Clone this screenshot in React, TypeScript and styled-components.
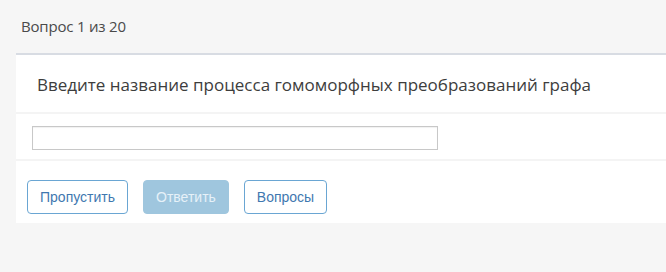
import styled, { createGlobalStyle } from "styled-components";

const GlobalStyle = createGlobalStyle`
  html, body {
    margin: 0;
    padding: 0;
    background: #f6f6f6;
    overflow: hidden;
  }
  body {
    font-family: "Open Sans", Lato, sans-serif;
  }
`;

const Page = styled.div`
  width: 666px;
  height: 272px;
  background: #f6f6f6;
  overflow: hidden;
`;

const Progress = styled.div`
  padding: 16px 0 0 21px;
  height: 20px;
  font-family: "Open Sans", sans-serif;
  font-size: 15px;
  line-height: 20px;
  color: #4a4a4a;
  letter-spacing: -0.2px;
`;

const Card = styled.section`
  margin: 17px -20px 0 16px;
  background: #fff;
  border-top: 2px solid #d8dce3;
`;

const Section = styled.div<{ $pad: string }>`
  padding: ${(p) => p.$pad};
  border-bottom: 2px solid #f4f4f4;

  &:last-child {
    border-bottom: none;
  }
`;

const Question = styled.h2`
  margin: 0;
  font-family: "Open Sans", sans-serif;
  font-weight: 400;
  font-size: 17px;
  line-height: 22px;
  color: #3d3d3d;
`;

const AnswerInput = styled.input`
  display: block;
  box-sizing: border-box;
  width: 406px;
  height: 24px;
  margin: 0;
  padding: 2px 6px;
  border: 1px solid #c8c8c8;
  border-radius: 0;
  box-shadow: inset 0 1px 1px rgba(0, 0, 0, 0.06);
  background: #fff;
  font-size: 14px;
  outline: none;
`;

const Actions = styled.div`
  display: flex;
  gap: 15px;
`;

const Button = styled.button<{ $primary?: boolean }>`
  box-sizing: border-box;
  height: 34px;
  padding: 0 12px;
  border-radius: 4px;
  font-family: "Liberation Sans", Arial, sans-serif;
  font-size: 14px;
  line-height: 32px;
  cursor: pointer;
  border: 1px solid ${(p) => (p.$primary ? "#9fc6de" : "#6aa6d3")};
  background: ${(p) => (p.$primary ? "#9fc6de" : "#fff")};
  color: ${(p) => (p.$primary ? "#e6f1f8" : "#3f78b0")};

  &:disabled {
    cursor: default;
  }
`;

export default function App() {
  return (
    <Page>
      <GlobalStyle />
      <Progress>Вопрос 1 из 20</Progress>
      <Card>
        <Section $pad="19px 21px 16px">
          <Question>Введите название процесса гомоморфных преобразований графа</Question>
        </Section>
        <Section $pad="12px 16px 9px">
          <AnswerInput type="text" />
        </Section>
        <Section $pad="19px 11px 9px">
          <Actions>
            <Button>Пропустить</Button>
            <Button $primary disabled>
              Ответить
            </Button>
            <Button>Вопросы</Button>
          </Actions>
        </Section>
      </Card>
    </Page>
  );
}
